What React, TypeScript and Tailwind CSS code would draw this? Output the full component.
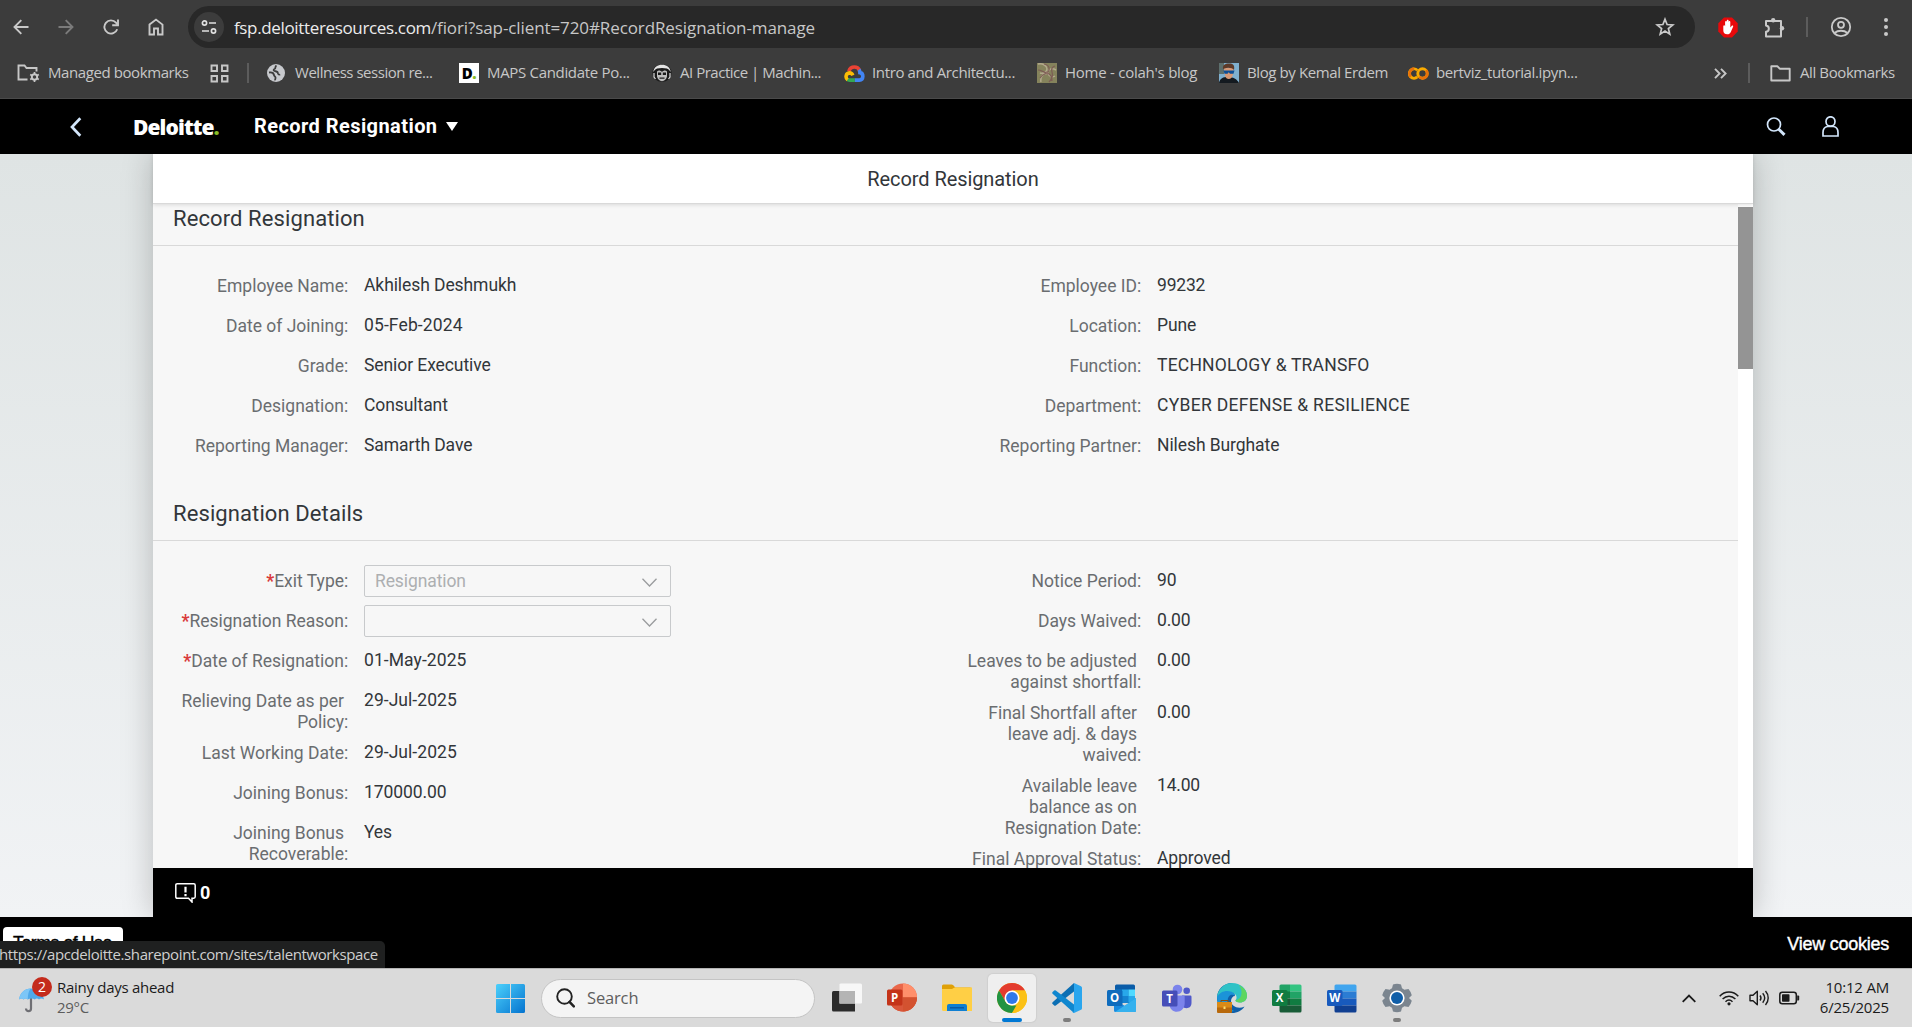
import type { ReactNode } from "react";

/* ---------- Browser icons ---------- */

const stroke = { fill: "none", stroke: "currentColor" } as const;

const ArrowIcon = ({ flip = false }: { flip?: boolean }) => (
  <svg width="16" height="16" viewBox="0 0 16 16" {...stroke} strokeWidth="1.9" className={flip ? "rotate-180" : ""}>
    <path d="M15.5 8H1.5M8.3 1.2L1.5 8l6.8 6.8" />
  </svg>
);

const ReloadIcon = () => (
  <svg width="16" height="16" viewBox="0 0 16 16" {...stroke} strokeWidth="1.9">
    <path d="M14.2 10.2A6.6 6.6 0 1 1 13 3.7L14.8 6" />
    <path d="M15 .6v5.7H9.2" />
  </svg>
);

const HomeIcon = () => (
  <svg width="16" height="18" viewBox="0 0 16 18" {...stroke} strokeWidth="1.9">
    <path d="M1.5 6.6L8 1.6l6.500 5V16.500H10V10.500H6V16.500H1.500z" />
  </svg>
);

const TuneIcon = () => (
  <svg width="16" height="16" viewBox="0 0 16 16" {...stroke} strokeWidth="1.7">
    <circle cx="3.500" cy="4" r="2.100" />
    <path d="M8 4h7M1 12h7" />
    <circle cx="12.500" cy="12" r="2.100" />
  </svg>
);

const StarIcon = () => (
  <svg width="20" height="20" viewBox="0 0 20 20" {...stroke} strokeWidth="1.700">
    <path d="M10 2.200l2.100 5.300 5.700.4-4.400 3.700 1.400 5.600L10 14.100l-4.800 3.100 1.400-5.600L2.200 7.900l5.700-.4z" />
  </svg>
);

const AdblockIcon = () => (
  <svg width="20" height="21" viewBox="0 0 20 21">
    <path d="M6 .5h8L19.700 6.300v8.200L14 20.400H6L.3 14.500V6.300z" fill="#e8090b" />
    <path
      d="M5.300 9.300c0-1.400 1.700-1.400 1.800 0V5c0-1.400 1.700-1.400 1.700 0V3.900c0-1.400 1.800-1.400 1.800 0V5c0-1.400 1.700-1.400 1.700 0v5.500l1.300-1.600c.9-.9 1.900-.2 1.500.8l-2.300 5.200c-.8 1.700-1.800 2.400-3.500 2.400-2.700 0-4-1.500-4-4z"
      fill="#fff"
    />
  </svg>
);

const PuzzleIcon = () => (
  <svg width="21" height="21" viewBox="0 0 21 21" {...stroke} strokeWidth="2">
    <path d="M2 4h15v15.500H2v-4.700c3.800-.6 3.800-5.700 0-6.300z" strokeLinejoin="round" />
    <circle cx="9.200" cy="3.200" r="2.200" fill="currentColor" stroke="none" />
    <circle cx="18" cy="11.200" r="2.200" fill="currentColor" stroke="none" />
  </svg>
);

const ProfileIcon = () => (
  <svg width="22" height="22" viewBox="0 0 22 22" {...stroke} strokeWidth="1.800">
    <circle cx="11" cy="11" r="9.200" />
    <circle cx="11" cy="8.800" r="3" />
    <path d="M4.500 17c3.500-3 9.500-3 13 0" />
  </svg>
);

const DotsIcon = () => (
  <svg width="6" height="20" viewBox="0 0 6 20" fill="currentColor">
    <circle cx="3" cy="3" r="2" />
    <circle cx="3" cy="10" r="2" />
    <circle cx="3" cy="17" r="2" />
  </svg>
);

const ManagedFolderIcon = () => (
  <svg width="23" height="20" viewBox="0 0 23 20" {...stroke} strokeWidth="1.900">
    <path d="M10.500 16.500H1.500v-14h6l2 2.500h10v3.500" />
    <circle cx="17.500" cy="14" r="2.700" />
    <path d="M17.500 9v2.500M17.500 16.500V19M13.200 11.500l2.100 1.200M19.700 15.300l2.100 1.200M13.200 16.500l2.100-1.200M19.700 12.700l2.100-1.200" strokeWidth="1.700" />
  </svg>
);

const GridIcon = () => (
  <svg width="19" height="19" viewBox="0 0 19 19" {...stroke} strokeWidth="1.900">
    <path d="M1.500 1.500h5.500v5.500H1.500zM12 1.500h5.500v5.500H12zM1.500 12h5.500v5.500H1.500zM12 12h5.500v5.500H12z" />
  </svg>
);

const GlobeIcon = () => (
  <svg width="18" height="18" viewBox="0 0 18 18">
    <circle cx="9" cy="9" r="9" fill="#c7c9cd" />
    <path
      d="M9.500 1.500c-2 1.300-.4 2.600-1.700 3.300-1.600.8-1.500 1.700-.3 2.200 1.800.5 3.500.3 3.300 2.200-.2 1 1.600 1 1.900 2.200M2 8.500c2.500-.3 4.700.5 5 2.500.2 1.500 1.300 1.300 1.500 2.500.2 1.300-.6 1.600-.4 2.900"
      fill="none"
      stroke="#3c3c3c"
      strokeWidth="1.800"
    />
  </svg>
);

const MaskIcon = () => (
  <svg width="20" height="18" viewBox="0 0 20 18">
    <ellipse cx="10" cy="9" rx="9.600" ry="8.800" fill="#1a1a1a" />
    <path d="M1.200 8C2 3 5.500.7 10 .7S18 3 18.800 8c-1.500-2-2.300-3-4-3.500-3-.8-6.600-.8-9.600 0C3.500 5 2.700 6 1.200 8z" fill="#e3e3e3" />
    <path d="M5 7.500c1.500-1.500 3.500-1 5 .5 1.500-1.500 3.500-2 5-.5v5c-.5 2.500-2.500 4.700-5 4.700s-4.500-2.200-5-4.700z" fill="#bdbdbd" />
    <path d="M6 8.500h3.200V11H6zM10.800 8.500H14V11h-3.200zM7.500 13.500h5v1.200h-5z" fill="#1a1a1a" />
    <path d="M2 9v4l1.500 2M18 9v4l-1.500 2" stroke="#ddd" fill="none" strokeWidth="1.200" />
  </svg>
);

const CloudIcon = () => (
  <svg width="21" height="17" viewBox="0 0 21 17" fill="none" strokeWidth="3.600">
    <path d="M4.800 6.200C5.700 3.400 7.800 2 10.400 2c2.300 0 4.200 1.200 5.200 3.400" stroke="#ea4335" />
    <path d="M15 4.600c.7 1 .9 2 .9 3 4 .6 4 7.400-.5 7.500H10.500" stroke="#4285f4" />
    <path d="M10.800 15.100H5.500c-1 0-1.700-.2-2.400-.7" stroke="#34a853" />
    <path d="M3.600 14.700C1.200 13 1.500 8.200 5.500 7.900c1.600 0 2.700.9 3.300 2.400" stroke="#fbbc04" />
  </svg>
);

const SpiralIcon = () => (
  <svg width="20" height="20" viewBox="0 0 20 20">
    <path d="M0 0h20v20H0z" fill="#85835c" />
    <path d="M1 1c5-1 9 2 9 5s-4 5-7 4M19 7c-5-3-8 0-8 3s4 5 7 3M4 19c-1-5 2-9 6-8" fill="none" stroke="#b3a98c" strokeWidth="1.500" />
    <path d="M7 1c6 1 6 6 4 8s-6 2-8 6M18 3c-3 1-4 3-3 6s1 6-3 10M1 7c3 0 5 2 9 3s5 4 5 8" fill="none" stroke="#7d5d55" strokeWidth="1.200" />
    <circle cx="10" cy="10" r="1.500" fill="#8d6f63" />
  </svg>
);

const PortraitIcon = () => (
  <svg width="20" height="20" viewBox="0 0 20 20">
    <path d="M0 0h20v20H0z" fill="#7fb0cf" />
    <path d="M0 0h5v11H0z" fill="#5d6f6d" />
    <path d="M0 20c1-5 4-6 9-6s9 2 11 6z" fill="#141a20" />
    <path d="M5 5h9.500l-.5 6c-.5 3-2 5-4.500 5S6 13 5.500 10z" fill="#d79a78" />
    <path d="M4 6c-.5-4 2-5.500 6-5.500S16 2 15 7c-1.500-2.500-7-3-9.500-1.500z" fill="#5d3a28" />
    <path d="M4.500 7.500h11l-1 3.200H11L9.700 9.200 8.500 10.700h-3z" fill="#0c4f96" />
  </svg>
);

const ColabIcon = () => (
  <svg width="21" height="13" viewBox="0 0 21 13" fill="none" strokeWidth="2.900">
    <path d="M9.300 3.200A4.700 4.700 0 1 0 9.300 9.900" stroke="#f9ab00" />
    <path d="M2.900 9.700A4.700 4.700 0 0 1 6.200 1.800" stroke="#e8710a" />
    <circle cx="14.500" cy="6.500" r="4.700" stroke="#f9ab00" />
    <path d="M17.900 3.200a4.700 4.700 0 0 1-6.700 6.600" stroke="#e8710a" />
  </svg>
);

const FolderOutlineIcon = () => (
  <svg width="21" height="17" viewBox="0 0 21 17" {...stroke} strokeWidth="1.900">
    <path d="M1.300 1.300h6.200l2.200 2.400h10v11.800H1.300z" strokeLinejoin="round" />
  </svg>
);

/* ---------- Browser chrome ---------- */

const Toolbar = () => (
  <div className="flex h-[54px] items-center pl-[13px] text-[#c9c9c9]">
    <div className="flex w-[175px] items-center">
      <span className="w-[45px]"><ArrowIcon /></span>
      <span className="w-[45px] text-[#7b7b7b]"><ArrowIcon flip /></span>
      <span className="w-[45px]"><ReloadIcon /></span>
      <HomeIcon />
    </div>
    <div className="flex h-[42px] w-[1507px] items-center rounded-full bg-[#282828] pr-5 pl-[6px]">
      <div className="flex size-[30px] items-center justify-center rounded-full bg-[#3c3c3c] text-[#e0e0e0]">
        <TuneIcon />
      </div>
      <div className="flex-1 pt-[2px] pl-[10px] font-['Open_Sans',sans-serif] text-[17px] leading-6 tracking-[-0.1px] text-[#c7c7c7]">
        <span className="tracking-[-0.35px] text-[#ececec]">fsp.deloitteresources.com</span>
        /fiori?sap-client=720#RecordResignation-manage
      </div>
      <StarIcon />
    </div>
    <div className="flex flex-1 items-center pl-[23px]">
      <AdblockIcon />
      <span className="ml-[26px]"><PuzzleIcon /></span>
      <span className="ml-[21px] h-5 w-[2px] bg-[#5c5c5c]" />
      <span className="ml-[22px]"><ProfileIcon /></span>
      <span className="ml-[31px]"><DotsIcon /></span>
    </div>
  </div>
);

const Bookmark = ({ icon, label, className }: { icon: ReactNode; label: string; className: string }) => (
  <div className={`flex shrink-0 items-center whitespace-nowrap ${className}`}>
    <span className="flex w-7 shrink-0 items-center">{icon}</span>
    <span className="-mt-[2px]">{label}</span>
  </div>
);

const BookmarksBar = () => (
  <div className="flex h-[45px] items-center border-b border-[#4a4a4a] pb-[6px] pl-[17px] font-['Open_Sans',sans-serif] text-[15px] leading-5 text-[#c7c7c7]">
    <Bookmark className="w-[193px] gap-[3px] tracking-[-0.41px]" icon={<ManagedFolderIcon />} label="Managed bookmarks" />
    <span className="w-[37px]"><GridIcon /></span>
    <span className="mr-[18px] h-5 w-[2px] bg-[#5c5c5c]" />
    <Bookmark className="w-[192px] tracking-[-0.47px]" icon={<GlobeIcon />} label="Wellness session re..." />
    <Bookmark
      className="w-[193px] tracking-[-0.32px]"
      icon={
        <span className="flex size-5 items-center justify-center bg-white text-[15px] font-extrabold text-black">
          D<span className="text-[#86bc25]">.</span>
        </span>
      }
      label="MAPS Candidate Po..."
    />
    <Bookmark className="w-[192px] tracking-[-0.48px]" icon={<MaskIcon />} label="AI Practice | Machin..." />
    <Bookmark className="w-[193px] tracking-[-0.37px]" icon={<CloudIcon />} label="Intro and Architectu..." />
    <Bookmark className="w-[182px] tracking-[-0.25px]" icon={<SpiralIcon />} label="Home - colah's blog" />
    <Bookmark className="w-[189px] tracking-[-0.4px]" icon={<PortraitIcon />} label="Blog by Kemal Erdem" />
    <Bookmark className="w-[306px] tracking-[-0.37px]" icon={<ColabIcon />} label="bertviz_tutorial.ipyn..." />
    <svg width="13" height="11" viewBox="0 0 13 11" {...stroke} strokeWidth="1.900">
      <path d="M1 .8l4.600 4.700L1 10.200M7 .8l4.600 4.700L7 10.200" />
    </svg>
    <span className="mr-5 ml-[21px] h-5 w-[2px] bg-[#5c5c5c]" />
    <Bookmark className="gap-[2px] tracking-[-0.4px]" icon={<FolderOutlineIcon />} label="All Bookmarks" />
  </div>
);

/* ---------- Application ---------- */

const ShellHeader = () => (
  <header className="flex h-[55px] items-center bg-black text-white">
    <svg width="12" height="20" viewBox="0 0 12 20" fill="none" stroke="#d3e6fb" strokeWidth="2.700" className="ml-[70px]">
      <path d="M10.300 1.200L2 10l8.300 8.800" />
    </svg>
    <div className="ml-[51px] w-[121px] font-['Open_Sans',sans-serif] text-[21px] leading-6 font-extrabold tracking-[-0.9px]">
      Deloitte<span className="text-[#86bc25]">.</span>
    </div>
    <div className="-mt-[2px] font-['Roboto',sans-serif] text-[20px] leading-6 font-bold tracking-[0.43px]">Record Resignation</div>
    <svg width="12" height="9" viewBox="0 0 12 9" className="ml-2">
      <path d="M0 0h12L6 9z" fill="#fff" />
    </svg>
    <div className="ml-auto flex items-center gap-[36px] pr-[73px]">
      <svg width="20" height="19" viewBox="0 0 20 19" fill="none" stroke="#d3e6fb">
        <circle cx="8" cy="7.500" r="6.500" strokeWidth="1.700" />
        <path d="M12.500 12l6 5.800" strokeWidth="3" />
      </svg>
      <svg width="17" height="21" viewBox="0 0 17 21" fill="none" stroke="#d3e6fb" strokeWidth="1.700">
        <ellipse cx="8.500" cy="5.500" rx="4.500" ry="4.700" />
        <path d="M1 20v-3.500c0-3.500 2-5.600 4.500-6h6c2.500.4 4.500 2.500 4.500 6V20z" />
      </svg>
    </div>
  </header>
);

type Field = { lines: string[]; value?: string; required?: boolean; select?: boolean; tracking?: string };

const Select = ({ value }: { value?: string }) => (
  <div className="mt-px flex h-8 w-[307px] items-center justify-between rounded-[2px] border border-[#c8cacc] pr-[13px] pl-[10px] tracking-[-0.1px] text-[#adafb1]">
    <span>{value}</span>
    <svg width="15" height="9" viewBox="0 0 15 9" fill="none" stroke="#9a9c9e" strokeWidth="1.300" className="mt-[2px]">
      <path d="M.5.700l7 7.300 7-7.300" />
    </svg>
  </div>
);

const FieldRow = ({ field }: { field: Field }) => (
  <div className="flex min-h-10 pb-[3px]">
    <div className="mt-[7px] w-[196px] shrink-0 pr-[5px] text-right whitespace-nowrap text-[#6a6d70]">
      {field.lines.map((line, i) => (
        <div key={line}>
          {i === 0 && field.required && <span className="font-bold text-[#d93a3a]">*</span>}
          {line}
          {i === field.lines.length - 1 && <span className="-mr-[5px] inline-block w-[5px] text-left">:</span>}
        </div>
      ))}
    </div>
    <div className={`ml-[15px] whitespace-nowrap text-[#32363a] ${field.tracking ?? "tracking-[-0.08px]"} ${field.select ? "" : "pt-[6px]"}`}>
      {field.select ? <Select value={field.value} /> : field.value}
    </div>
  </div>
);

const Section = ({ title, left, right }: { title: string; left: Field[]; right: Field[] }) => (
  <section>
    <h2 className="flex h-[49px] items-start border-b border-[#d9d9d9] pt-2 pl-5 text-[22px] leading-7 tracking-[0.1px] text-[#32363a]">
      {title}
    </h2>
    <div className="flex pt-[23px] text-[17.5px] leading-[21px] tracking-[0px]">
      <div className="w-[793px]">
        {left.map((f) => (
          <FieldRow key={f.lines[0]} field={f} />
        ))}
      </div>
      <div>
        {right.map((f) => (
          <FieldRow key={f.lines[0]} field={f} />
        ))}
      </div>
    </div>
  </section>
);

const employeeLeft: Field[] = [
  { lines: ["Employee Name"], value: "Akhilesh Deshmukh" },
  { lines: ["Date of Joining"], value: "05-Feb-2024", tracking: "tracking-[0.12px]" },
  { lines: ["Grade"], value: "Senior Executive" },
  { lines: ["Designation"], value: "Consultant" },
  { lines: ["Reporting Manager"], value: "Samarth Dave" },
];

const employeeRight: Field[] = [
  { lines: ["Employee ID"], value: "99232", tracking: "tracking-[-0.2px]" },
  { lines: ["Location"], value: "Pune" },
  { lines: ["Function"], value: "TECHNOLOGY & TRANSFO", tracking: "tracking-[0.2px]" },
  { lines: ["Department"], value: "CYBER DEFENSE & RESILIENCE", tracking: "tracking-[0.3px]" },
  { lines: ["Reporting Partner"], value: "Nilesh Burghate" },
];

const detailsLeft: Field[] = [
  { lines: ["Exit Type"], value: "Resignation", required: true, select: true },
  { lines: ["Resignation Reason"], required: true, select: true },
  { lines: ["Date of Resignation"], value: "01-May-2025", required: true, tracking: "tracking-[0.08px]" },
  { lines: ["Relieving Date as per", "Policy"], value: "29-Jul-2025", tracking: "tracking-[0.05px]" },
  { lines: ["Last Working Date"], value: "29-Jul-2025", tracking: "tracking-[0.05px]" },
  { lines: ["Joining Bonus"], value: "170000.00" },
  { lines: ["Joining Bonus", "Recoverable"], value: "Yes" },
];

const detailsRight: Field[] = [
  { lines: ["Notice Period"], value: "90" },
  { lines: ["Days Waived"], value: "0.00", tracking: "tracking-[-0.2px]" },
  { lines: ["Leaves to be adjusted", "against shortfall"], value: "0.00", tracking: "tracking-[-0.2px]" },
  { lines: ["Final Shortfall after", "leave adj. & days", "waived"], value: "0.00", tracking: "tracking-[-0.2px]" },
  { lines: ["Available leave", "balance as on", "Resignation Date"], value: "14.00", tracking: "tracking-[-0.2px]" },
  { lines: ["Final Approval Status"], value: "Approved" },
];

const Workspace = () => (
  <main className="flex h-[763px] justify-center overflow-hidden bg-linear-to-b from-[#dfe4e4] to-[#f1f3f5] pr-[6px]">
    <div className="flex w-[1600px] flex-col bg-white font-['Roboto',sans-serif] shadow-[0_0_30px_rgba(0,0,0,0.22)]">
      <div className="z-10 flex h-[49px] shrink-0 items-center justify-center text-[20px] leading-6 tracking-[-0.08px] text-[#32363a] shadow-[0_1px_0_#d9d9d9,0_2px_4px_rgba(0,0,0,0.12)]">
        Record Resignation
      </div>
      <div className="flex h-[665px] shrink-0">
        <div className="flex w-[1585px] flex-col overflow-hidden bg-[#f7f7f7]">
          <div className="-mt-[6px] h-[295px] shrink-0">
            <Section title="Record Resignation" left={employeeLeft} right={employeeRight} />
          </div>
          <div className="shrink-0">
            <Section title="Resignation Details" left={detailsLeft} right={detailsRight} />
          </div>
        </div>
        <div className="w-[15px] bg-white pt-1">
          <div className="h-[162px] bg-[#949494]" />
        </div>
      </div>
      <div className="flex h-[49px] items-center gap-[5px] bg-black pl-[22px] text-[18px] font-bold text-white">
        <svg width="21" height="20" viewBox="0 0 21 20" fill="none" stroke="#fff" strokeWidth="1.500" className="mt-[1px]">
          <path d="M2.200.8h16.600q1.400 0 1.400 1.400v11.600q0 1.400-1.400 1.400H17V19l-3.500-3.800H2.200q-1.400 0-1.400-1.400V2.200Q.8.800 2.200.8z" />
          <path d="M10.500 3.800v5.700M10.500 11v2.300" strokeWidth="2.200" />
        </svg>
        <span className="-ml-px">0</span>
      </div>
    </div>
  </main>
);

const PageFooter = () => (
  <footer className="relative flex h-[51px] justify-between bg-black pr-[23px] pl-[3px] font-['Liberation_Sans',sans-serif] text-[18px]">
    <div className="mt-[10px] h-8 w-[120px] rounded-[4px] bg-white pl-[10px] text-[17.5px] leading-[32px] tracking-[-0.35px] text-black [-webkit-text-stroke:0.400px_#000]">
      Terms of Use
    </div>
    <div className="pt-[13px] leading-[28px] tracking-[-0.25px] text-white [-webkit-text-stroke:0.400px_#fff]">View cookies</div>
    <div className="absolute bottom-0 left-0 h-[27px] w-[385px] overflow-hidden rounded-tr-[5px] bg-[#1f2020] font-['Open_Sans',sans-serif] text-[15px] leading-[26px] tracking-[-0.4px] whitespace-nowrap text-[#cfcfcf]">
      <span className="-ml-px">https://apcdeloitte.sharepoint.com/sites/talentworkspace</span>
    </div>
  </footer>
);

/* ---------- Taskbar ---------- */

const UmbrellaIcon = () => (
  <svg width="26" height="26" viewBox="0 0 26 26">
    <path d="M12 10v11.500c0 3.600-5 3.600-5 0" fill="none" stroke="#6f6f74" strokeWidth="2.200" />
    <path d="M0 12.500C1.500 5 6 1.500 12 1.500S23.500 5 25 12.500c-1.500-1.300-3.700-1.300-5 0-1.200-1.300-3-1.300-4.200 0-1.800-1.300-5-1.300-7 0-1.500-1.300-3-1.300-4.200 0-1.300-1.300-3.100-1.300-4.600 0z" fill="#4fa9ea" />
    <path d="M8.800 12.500C8.800 6 10.500 2.500 12 1.500 6 1.500 1.500 5 0 12.500c1.500-1.300 3.300-1.300 4.600 0 1.200-1.300 2.700-1.300 4.200 0z" fill="#7cc6f7" />
  </svg>
);

const WindowsIcon = () => (
  <svg width="29" height="29" viewBox="0 0 29 29">
    <defs>
      <linearGradient id="win" x1="0" y1="0" x2="1" y2="1" gradientUnits="objectBoundingBox">
        <stop offset="0" stopColor="#4cd0fb" />
        <stop offset="1" stopColor="#0473cf" />
      </linearGradient>
    </defs>
    <path d="M1.500 0H14v14H0V1.500Q0 0 1.500 0zM15 0h12.500Q29 0 29 1.500V14H15zM0 15h14v14H1.500Q0 29 0 27.500zM15 15h14v12.500q0 1.500-1.500 1.500H15z" fill="url(#win)" />
  </svg>
);

const TaskViewIcon = () => (
  <svg width="30" height="30" viewBox="0 0 30 30">
    <path d="M0 9.500Q0 8 1.500 8H23v20.500H1.500Q0 28.500 0 27z" fill="#2b2b2b" />
    <path d="M7.500 1.500Q7.500.5 9 .5h19.500Q30 .5 30 2v17.500q0 1-1 1H7.500z" fill="#f7f7f7" />
    <path d="M7.500 8H23v12.500H7.500z" fill="#b4b4b4" />
  </svg>
);

const Tile = ({ letter, color, x = 0, y = 6 }: { letter: string; color: string; x?: number; y?: number }) => (
  <>
    <rect x={x} y={y} width="15.500" height="16" rx="1.500" fill={color} />
    <text x={x + 7.700} y={y + 12.200} textAnchor="middle" fill="#fff" fontFamily="Open Sans, sans-serif" fontWeight="700" fontSize="11.500">
      {letter}
    </text>
  </>
);

const PowerPointIcon = () => (
  <svg width="30" height="30" viewBox="0 0 30 30">
    <circle cx="16" cy="14.500" r="14" fill="#e9674a" />
    <path d="M16 .5a14 14 0 0 1 14 14H16z" fill="#ff8f6b" />
    <path d="M2 14.500h28a14 14 0 0 1-26 7z" fill="#d35230" />
    <path d="M2 14.500h14v14a14 14 0 0 1-14-14z" fill="#d9573a" />
    <path d="M16 14.500h14a14 14 0 0 1-14 14z" fill="#d35230" />
    <Tile letter="P" color="#c43419" y={6.500} />
  </svg>
);

const ExplorerIcon = () => (
  <svg width="30" height="28" viewBox="0 0 30 28">
    <path d="M0 2Q0 .5 1.500.5h8q1 0 1.800.8l2 2.200H28q2 0 2 2V12H0z" fill="#dfa008" />
    <path d="M0 5h10l2.500-1.500H30V27H1.500Q0 27 0 25.500z" fill="#ffcf45" />
    <path d="M5 27v-5q0-2 2-2h16q2 0 2 2v5z" fill="#0f7fd2" />
    <path d="M8 23.800h14" stroke="#0a549c" strokeWidth="1.300" />
  </svg>
);

const ChromeIcon = () => (
  <svg width="30" height="30" viewBox="0 0 30 30">
    <circle cx="15" cy="15" r="15" fill="#fbc116" />
    <path d="M15 0c5.500 0 10.400 3 13 7.500H15L8.500 18.750 2 7.500A15 15 0 0 1 15 0z" fill="#e33b2e" />
    <path d="M2 7.500l6.500 11.250A7.500 7.500 0 0 0 15 22.500h6.500L15 30A15 15 0 0 1 2 7.500z" fill="#229342" />
    <path d="M21.500 18.750L15 30a15 15 0 0 0 13-22.500H15z" fill="#fbc116" />
    <circle cx="15" cy="15" r="7.500" fill="#fff" />
    <circle cx="15" cy="15" r="5.900" fill="#2f78ea" />
  </svg>
);

const VsCodeIcon = () => (
  <svg width="30" height="30" viewBox="0 0 30 30">
    <path d="M22 0L.6 19.300q-.8.900 0 1.700l1.600 1.500q.8.600 1.600 0L22 8.500z" fill="#0b6fb4" />
    <path d="M22 30L.6 10.700q-.8-.9 0-1.700l1.600-1.500q.8-.6 1.600 0L22 21.500z" fill="#0f87cf" />
    <path d="M22 0l7 3.200q1 .5 1 1.600v20.400q0 1.100-1 1.600L22 30q-1 0-1.500-.8l1.500-.7z" fill="#2aa6ee" />
  </svg>
);

const OutlookIcon = () => (
  <svg width="30" height="29" viewBox="0 0 30 29">
    <path d="M8 2q0-1.500 1.500-1.500h17Q28 .5 28 2v16H8z" fill="#0a5ca8" />
    <path d="M8 5.500h7v6.500H8z" fill="#0f78c9" />
    <path d="M15 5.500h6.500v6.500H15z" fill="#28a8ea" />
    <path d="M21.500 5.500H28v6.500h-6.500z" fill="#50d9ff" />
    <path d="M8 12h20v7H8z" fill="#1583d0" />
    <path d="M21.500 12H28v6h-6.500z" fill="#28a8ea" />
    <path d="M7 16l11 6 11-8v12.500q0 1.500-1.500 1.500H8.500Q7 28 7 26.500z" fill="#1a8ade" />
    <path d="M29 14v12.500q0 1.500-1.500 1.500H8z" fill="#35b1ee" />
    <Tile letter="O" color="#0f6cbd" />
  </svg>
);

const TeamsIcon = () => (
  <svg width="30" height="29" viewBox="0 0 30 29">
    <circle cx="15.500" cy="5.500" r="4.800" fill="#7b83eb" />
    <circle cx="24.700" cy="6.800" r="3.300" fill="#5059c9" />
    <path d="M20 11.500h8.300q1.200 0 1.200 1.200v6.300c0 6-7 6.500-9.500 3z" fill="#5059c9" />
    <path d="M9 11.500h12.500q1.200 0 1.200 1.200V19c0 11.500-15.200 11.500-15.200 1z" fill="#7b83eb" />
    <Tile letter="T" color="#464eb8" y={6.500} />
  </svg>
);

const EdgeIcon = () => (
  <svg width="30" height="30" viewBox="0 0 30 30">
    <path d="M15 0C6.700 0 0 6.500 0 15s6.500 15 15 15c5.500 0 10-2.500 12.500-6.500-6 3-13.500 0-13.500-5.500 0-3 2-5 4-5z" fill="#0f5fa8" />
    <path d="M0 14C1.500 8 7 6.500 12 7.500c4 .8 6 3 6 5.500-3-3-8.500 0-7 6.500C12 25 15 27 17 28 8 31 0 24 0 14z" fill="#1b93d8" />
    <path d="M0 14C1 6 7.500 0 15 0c8.500 0 15 6 15 12.500 0 5-3.500 7-7 7-3 0-5-1-4.500-2.200 1.500-1.500 1.500-4.300-.5-6.300C13 6 3.500 7 0 14z" fill="#2fc2c6" />
    <path d="M22 2c5 2.500 8 6.500 8 10.500 0 5-3.500 7-7 7-3 0-5-1-4.500-2.200C24 17 27 9 22 2z" fill="#5ed660" />
    <path d="M0 20q0-1 1-1h13q1 0 1 1v9q0 1-1 1H1q-1 0-1-1z" fill="#b8690c" />
    <path d="M0 20q0-1 1-1h13q1 0 1 1v4.500H0z" fill="#d98a17" />
    <path d="M4 19v-1.500h7V19" stroke="#8f4d08" fill="none" />
    <path d="M6.500 23.500h2v2.500h-2z" fill="#ffdc6a" />
  </svg>
);

const ExcelIcon = () => (
  <svg width="30" height="29" viewBox="0 0 30 29">
    <path d="M7.500 2Q7.500.5 9 .5h9V8H7.500z" fill="#21a366" />
    <path d="M18 .5h10Q29.500.5 29.500 2v5.500H18z" fill="#33c481" />
    <path d="M7.500 7.500H18v7H7.500z" fill="#107c41" />
    <path d="M18 7.500h11.500v7H18z" fill="#21a366" />
    <path d="M7.500 14.500H18v7H7.500z" fill="#185c37" />
    <path d="M18 14.500h11.500v7H18z" fill="#107c41" />
    <path d="M7.500 21.500h22V27q0 1.500-1.500 1.500H9Q7.500 28.500 7.500 27z" fill="#185c37" />
    <Tile letter="X" color="#107c41" />
  </svg>
);

const WordIcon = () => (
  <svg width="30" height="29" viewBox="0 0 30 29">
    <path d="M7.500 2Q7.500.5 9 .5h19Q29.500.5 29.500 2v5.500h-22z" fill="#41a5ee" />
    <path d="M7.500 7.500h22v7h-22z" fill="#2b7cd3" />
    <path d="M7.500 14.500h22v7h-22z" fill="#185abd" />
    <path d="M7.500 21.500h22V27q0 1.500-1.500 1.500H9Q7.500 28.500 7.500 27z" fill="#103f91" />
    <Tile letter="W" color="#185abd" />
  </svg>
);

const SettingsIcon = () => (
  <svg width="30" height="30" viewBox="0 0 30 30">
    <path
      d="M11 1.500q4-1.500 8 0l1 3.800q1.500.7 2.300 1.400L26.500 6q2.500 2.800 3.300 6.300L27 15l2.800 2.700q-.8 3.500-3.300 6.300l-4.200-.7q-.8.700-2.300 1.400l-1 3.800q-4 1.500-8 0l-1-3.800q-1.500-.7-2.300-1.400L3.500 24Q1 21.200.2 17.700L3 15 .2 12.300Q1 8.800 3.500 6l4.200.7Q8.500 6 10 5.300z"
      fill="#7b858f"
    />
    <circle cx="15" cy="15" r="7.600" fill="#fff" />
    <circle cx="15" cy="15" r="6" fill="#0f5ea8" />
  </svg>
);

type TaskbarApp = { name: string; icon: ReactNode; state?: "active" | "running" };

const apps: TaskbarApp[] = [
  { name: "Task view", icon: <TaskViewIcon /> },
  { name: "PowerPoint", icon: <PowerPointIcon /> },
  { name: "Explorer", icon: <ExplorerIcon /> },
  { name: "Chrome", icon: <ChromeIcon />, state: "active" },
  { name: "VS Code", icon: <VsCodeIcon />, state: "running" },
  { name: "Outlook", icon: <OutlookIcon /> },
  { name: "Teams", icon: <TeamsIcon /> },
  { name: "Edge", icon: <EdgeIcon /> },
  { name: "Excel", icon: <ExcelIcon /> },
  { name: "Word", icon: <WordIcon /> },
  { name: "Settings", icon: <SettingsIcon />, state: "running" },
];

const Taskbar = () => (
  <div className="flex h-[59px] items-center border-t border-[#b3b3b3] bg-[#dadada] font-['Open_Sans',sans-serif] text-[15px] leading-5 text-[#1b1b1b]">
    <div className="relative flex w-[496px] items-center pl-[19px]">
      <span className="w-[38px] pt-1"><UmbrellaIcon /></span>
      <span className="absolute top-[-2px] left-[32px] flex size-5 items-center justify-center rounded-full bg-[#c42b1c] text-[14px] text-white">2</span>
      <div className="-mt-[2px] tracking-[-0.28px]">
        <div>Rainy days ahead</div>
        <div className="text-[#5c5c5c]">29°C</div>
      </div>
    </div>
    <WindowsIcon />
    <div className="ml-4 flex h-[39px] w-[274px] items-center rounded-full border border-[#c4c4c4] bg-[#f4f4f4] pl-[14px]">
      <svg width="19" height="20" viewBox="0 0 19 20" fill="none" stroke="#222">
        <circle cx="8.500" cy="8.500" r="7.300" strokeWidth="1.900" />
        <path d="M13.500 13.800l4.300 4.600" strokeWidth="2.500" strokeLinecap="round" />
      </svg>
      <span className="pl-3 text-[16.500px] tracking-[-0.15px] text-[#5e5e5e]">Search</span>
    </div>
    <div className="ml-1 flex">
      {apps.map((app) => (
        <div key={app.name} className="flex w-[55px] justify-center">
          <div
            className={`relative flex size-12 items-center justify-center rounded-[5px] ${app.state === "active" ? "bg-[#efefef] shadow-[0_0_1px_1px_#cfcfcf]" : ""}`}
          >
            {app.icon}
            {app.state === "active" && <span className="absolute bottom-0 h-1 w-5 rounded-full bg-[#0078d4]" />}
            {app.state === "running" && <span className="absolute bottom-0 h-1 w-2 rounded-full bg-[#7d7d7d]" />}
          </div>
        </div>
      ))}
    </div>
    <div className="ml-auto flex items-center">
      <svg width="14" height="9" viewBox="0 0 14 9" fill="none" stroke="#1b1b1b" strokeWidth="1.800">
        <path d="M.7 7.800L7 1.500l6.300 6.300" />
      </svg>
      <svg width="20" height="16" viewBox="0 0 20 16" fill="none" stroke="#1b1b1b" strokeWidth="1.500" className="ml-[23px]">
        <path d="M.7 6.200c5.200-5.500 13.400-5.500 18.600 0M3.600 9c3.700-3.800 9.100-3.800 12.800 0M6.500 11.700c2.100-2.100 4.900-2.100 7 0" />
        <circle cx="10" cy="13.800" r="1.600" fill="#1b1b1b" stroke="none" />
      </svg>
      <svg width="21" height="18" viewBox="0 0 21 18" fill="none" stroke="#1b1b1b" strokeWidth="1.400" className="ml-[10px]">
        <path d="M1 6.300h3L8.300 2.300v13.400L4 11.700H1z" strokeLinejoin="round" />
        <path d="M11 6.500c1.200 1.500 1.200 3.500 0 5M13.700 4.300c2.400 2.800 2.400 6.600 0 9.400M16.500 2c3.600 4 3.600 10 0 14" />
      </svg>
      <svg width="21" height="14" viewBox="0 0 21 14" className="ml-[9px]">
        <rect x=".8" y="1.200" width="16.500" height="11.600" rx="2.500" fill="none" stroke="#1b1b1b" strokeWidth="1.500" />
        <rect x="3" y="3.300" width="7.500" height="7.400" rx=".8" fill="#1b1b1b" />
        <path d="M18.200 4.500h1q1 0 1 1v3q0 1-1 1h-1z" fill="#1b1b1b" />
      </svg>
      <div className="-mt-[2px] w-[112px] pr-[23px] text-right tracking-[-0.200px]">
        <div>10:12 AM</div>
        <div>6/25/2025</div>
      </div>
    </div>
  </div>
);

export default function App() {
  return (
    <div className="flex h-[1027px] w-[1912px] flex-col overflow-hidden">
      <div className="bg-[#3c3c3c]">
        <Toolbar />
        <BookmarksBar />
      </div>
      <ShellHeader />
      <Workspace />
      <PageFooter />
      <Taskbar />
    </div>
  );
}
